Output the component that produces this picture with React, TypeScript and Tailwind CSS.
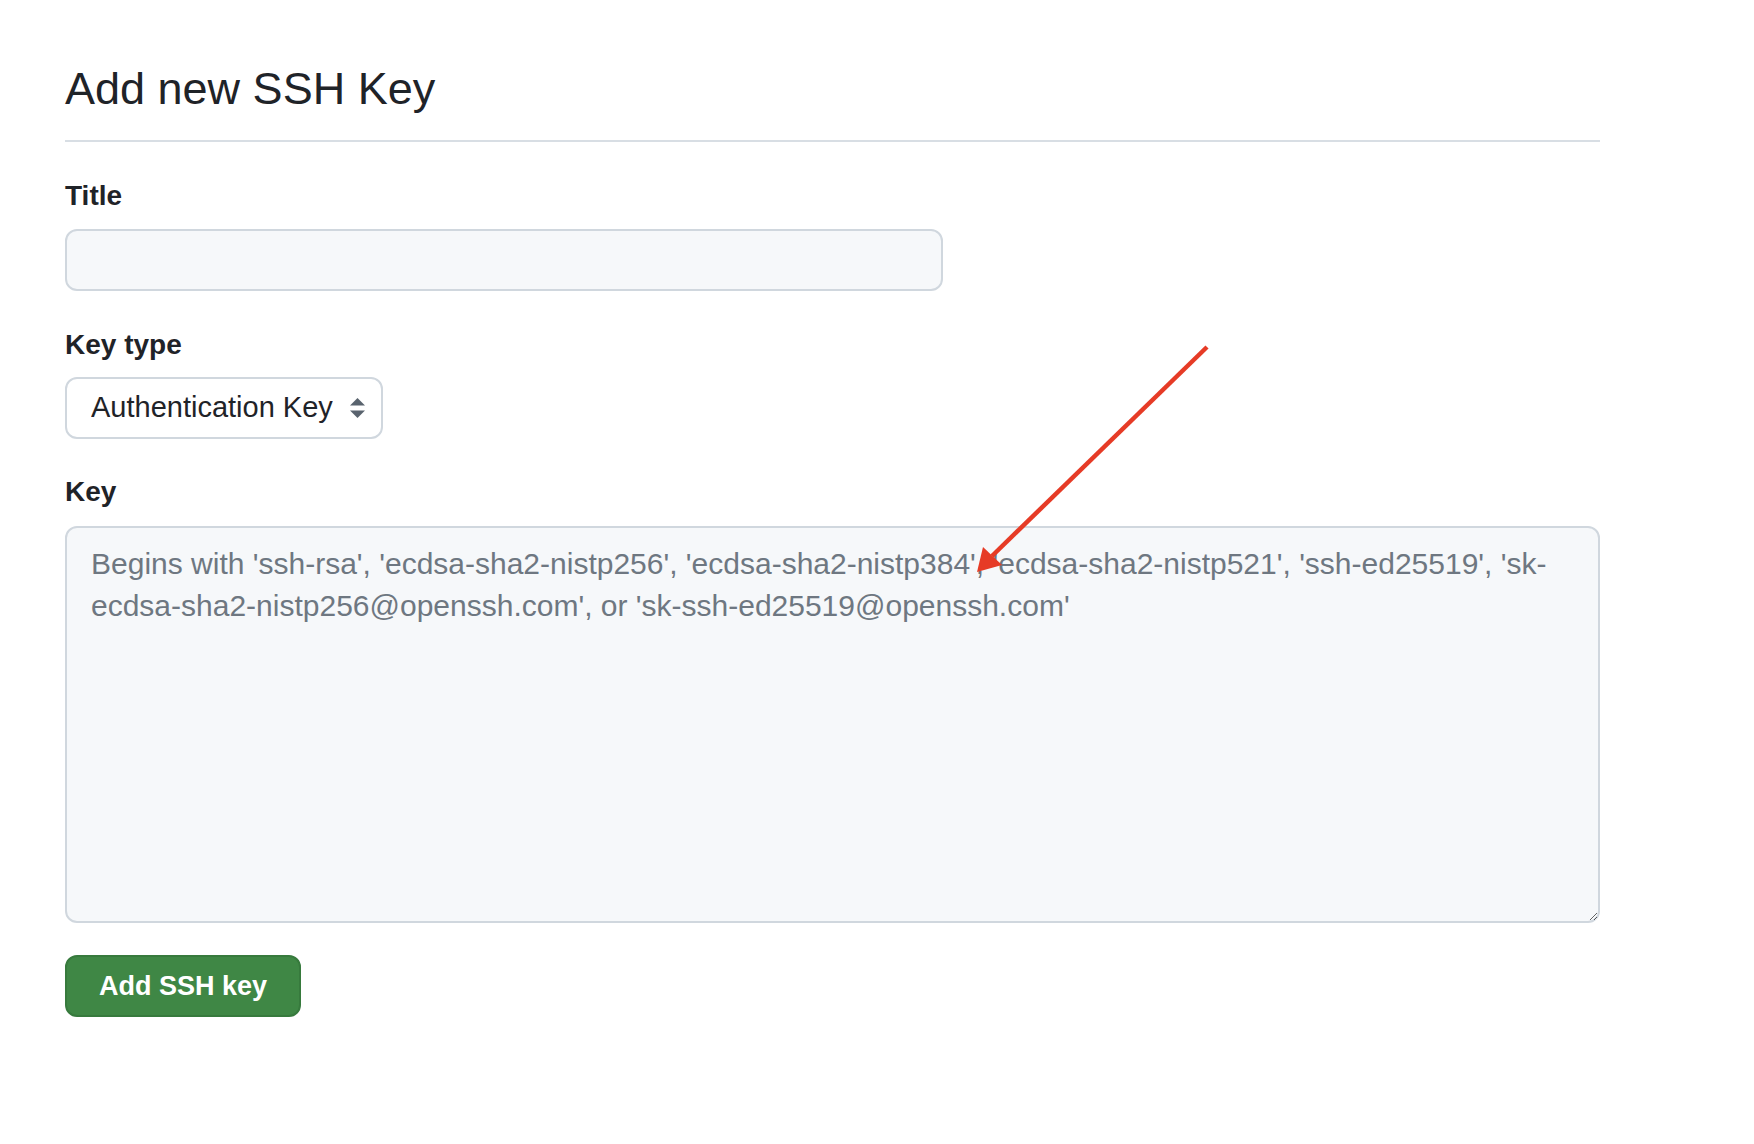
import React from 'react';

const font = { fontFamily: '"Liberation Sans", Arial, sans-serif' };

function SelectArrows() {
  return (
    <svg className="pointer-events-none absolute right-[18px] top-1/2 -translate-y-1/2" width="15" height="20" viewBox="0 0 15 20">
      <path d="M7.5 0 L15 7.5 L0 7.5 Z" fill="#59636e" />
      <path d="M7.5 20 L15 12.5 L0 12.5 Z" fill="#59636e" />
    </svg>
  );
}

export default function App() {
  return (
    <div className="relative min-h-[1144px] w-full bg-white text-[#1f2328]" style={font}>
      <div className="w-[1535px] ml-[65px] pt-[61px]">
        <h1 className="text-[45px] leading-[56px] font-normal pb-[23px] border-b-2 border-[#d8dee4]">
          Add new SSH Key
        </h1>

        <div className="mt-[36px]">
          <label className="block text-[28px] leading-[36px] font-bold mb-[15px]">Title</label>
          <input
            type="text"
            className="block w-[878px] h-[62px] rounded-[12px] border-2 border-[#d0d7de] bg-[#f6f8fa] px-[24px] text-[29px] outline-none"
          />
        </div>

        <div className="mt-[36px]">
          <label className="block text-[28px] leading-[36px] font-bold mb-[14px]">Key type</label>
          <div className="relative w-[318px]">
            <select
              defaultValue="auth"
              className="block w-full h-[62px] appearance-none rounded-[12px] border-2 border-[#d0d7de] bg-white pl-[24px] pr-[48px] text-[29px] text-[#1f2328] outline-none"
              style={font}
            >
              <option value="auth">Authentication Key</option>
              <option value="sign">Signing Key</option>
            </select>
            <SelectArrows />
          </div>
        </div>

        <div className="mt-[35px]">
          <label className="block text-[28px] leading-[36px] font-bold mb-[16px]">Key</label>
          <textarea
            className="block w-full h-[397px] rounded-[12px] border-2 border-[#d0d7de] bg-[#f6f8fa] px-[24px] pt-[15px] text-[30px] leading-[42px] placeholder:text-[#6e7781] outline-none"
            style={font}
            placeholder="Begins with 'ssh-rsa', 'ecdsa-sha2-nistp256', 'ecdsa-sha2-nistp384', 'ecdsa-sha2-nistp521', 'ssh-ed25519', 'sk-ecdsa-sha2-nistp256@openssh.com', or 'sk-ssh-ed25519@openssh.com'"
          />
        </div>

        <button
          type="button"
          className="mt-[32px] w-[236px] h-[62px] rounded-[12px] border-2 border-[#377a3d] bg-[#3f8745] text-white text-[27px] font-bold"
          style={font}
        >
          Add SSH key
        </button>
      </div>

      {/* annotation arrow */}
      <svg className="pointer-events-none absolute left-0 top-0" width="1754" height="1144">
        <line x1="1207" y1="347" x2="992" y2="556" stroke="#e63b26" strokeWidth="4.5" strokeLinecap="butt" />
        <path d="M977 572 L983 547 L1002 565 Z" fill="#e63b26" />
      </svg>
    </div>
  );
}
